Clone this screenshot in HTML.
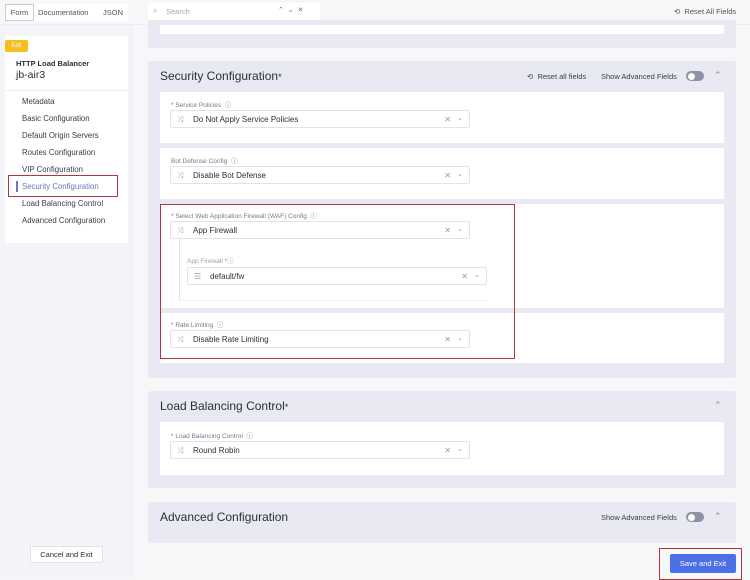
<!DOCTYPE html><html><head><style>
*{box-sizing:border-box;margin:0;padding:0}
body{width:750px;height:577px;overflow:hidden;background:#f6f7f9;font-family:"Liberation Sans",sans-serif;color:#2c2f3a;position:relative}
.a{position:absolute}
.panel{position:absolute;left:148px;width:588px;background:#e8e9f2;border-radius:3px}
.card{position:absolute;left:160px;width:564px;background:#fff}
.lbl{position:absolute;font-size:6.5px;color:#777b88}
.inp{position:absolute;width:300px;height:18px;border:1px solid #e1e3ea;background:#fff;font-size:8px;color:#2c2f3a;border-radius:2px}
.inp .t{position:absolute;left:22px;top:4px}
.inp .ic{position:absolute;left:6px;top:4px;font-size:8px;color:#9a9eaa}
.inp .x{position:absolute;right:18px;top:4px;font-size:8px;color:#999}
.inp .v{position:absolute;right:6px;top:3px;font-size:7px;color:#999}
.h{position:absolute;font-size:12px;color:#2c2f3a}
.nav{position:absolute;left:22px;font-size:7.8px;color:#3a3d48}
.tog{position:absolute;width:18px;height:10px;border-radius:5px;background:#8e93a3}
.tog:after{content:"";position:absolute;left:1.5px;top:1.5px;width:7px;height:7px;border-radius:50%;background:#fff}
.small{font-size:7.5px;color:#3a3d48}
</style></head><body>
<div class="a" style="left:0;top:0;width:750px;height:25px;background:#f6f7f9;border-bottom:1px solid #eceef2"></div>
<div class="a" style="left:5px;top:4px;width:123px;height:17px;background:#fff"></div>
<div class="a" style="left:5px;top:4px;width:29px;height:17px;border:1px solid #c9ccd6;background:#fff;font-size:7.5px;color:#555;text-align:center;line-height:15px">Form</div>
<div class="a small" style="left:38px;top:8px;color:#555">Documentation</div>
<div class="a small" style="left:103px;top:8px;color:#555">JSON</div>
<div class="a" style="left:148px;top:3px;width:172px;height:17px;background:#fff;border-radius:2px"></div>
<div class="a" style="left:153px;top:6px;font-size:8px;color:#aaa">⌕</div>
<div class="a small" style="left:166px;top:7px;color:#aaa">Search</div>
<div class="a" style="left:278px;top:6px;font-size:7px;color:#777">⌃ &nbsp;⌄ &nbsp;✕</div>
<div class="a small" style="left:674px;top:7px;color:#555">⟲ &nbsp;Reset All Fields</div>
<div class="a" style="left:0;top:25px;width:133px;height:552px;background:#f3f4f7;border-right:1px solid #eceef2"></div>
<div class="a" style="left:5px;top:36px;width:123px;height:207px;background:#fff"></div>
<div class="a" style="left:5px;top:40px;width:23px;height:12px;background:#f5bd1f;border-radius:2px;font-size:6px;color:#fff;text-align:center;line-height:12px">Edit</div>
<div class="a" style="left:16px;top:59px;font-size:7.5px;font-weight:bold;color:#2c2f3a">HTTP Load Balancer</div>
<div class="a" style="left:16px;top:69px;font-size:10.5px;color:#2c2f3a">jb-air3</div>
<div class="a" style="left:5px;top:90px;width:123px;height:1px;background:#eceef2"></div>
<div class="nav" style="top:97px">Metadata</div>
<div class="nav" style="top:114px">Basic Configuration</div>
<div class="nav" style="top:131px">Default Origin Servers</div>
<div class="nav" style="top:148px">Routes Configuration</div>
<div class="nav" style="top:165px">VIP Configuration</div>
<div class="nav" style="top:182px;color:#6a78b8">Security Configuration</div>
<div class="a" style="left:16px;top:181px;width:1.5px;height:11px;background:#6a78b8"></div>
<div class="a" style="left:8px;top:175px;width:110px;height:22px;border:1.5px solid #b3343f"></div>
<div class="nav" style="top:199px">Load Balancing Control</div>
<div class="nav" style="top:216px">Advanced Configuration</div>
<div class="a" style="left:30px;top:546px;width:73px;height:17px;background:#fff;border:1px solid #e1e3ea;font-size:7.5px;text-align:center;line-height:15px">Cancel and Exit</div>
<div class="panel" style="top:20px;height:28px"></div>
<div class="card" style="top:25px;height:9px"></div>
<div class="panel" style="top:61px;height:317px"></div>
<div class="h" style="left:160px;top:69px">Security Configuration<span style="font-size:9px">*</span></div>
<div class="a small" style="left:527px;top:72px">⟲ &nbsp;Reset all fields</div>
<div class="a small" style="left:601px;top:72px">Show Advanced Fields</div>
<div class="tog" style="left:686px;top:71px"></div>
<div class="a" style="left:714px;top:70px;font-size:9px;color:#888">⌃</div>
<div class="card" style="top:92px;height:51px"></div>
<div class="lbl" style="left:171px;top:99px">* Service Policies &nbsp;ⓘ</div>
<div class="inp" style="left:170px;top:110px"><span class="ic">⤨</span><span class="t">Do Not Apply Service Policies</span><span class="x">✕</span><span class="v">⌄</span></div>
<div class="card" style="top:148px;height:51px"></div>
<div class="lbl" style="left:171px;top:155px">Bot Defense Config &nbsp;ⓘ</div>
<div class="inp" style="left:170px;top:166px"><span class="ic">⤨</span><span class="t">Disable Bot Defense</span><span class="x">✕</span><span class="v">⌄</span></div>
<div class="card" style="top:204px;height:104px"></div>
<div class="lbl" style="left:171px;top:210px">* Select Web Application Firewall (WAF) Config &nbsp;ⓘ</div>
<div class="inp" style="left:170px;top:221px"><span class="ic">⤨</span><span class="t">App Firewall</span><span class="x">✕</span><span class="v">⌄</span></div>
<div class="a" style="left:179px;top:239px;width:1px;height:62px;background:#e1e3ea"></div>
<div class="a" style="left:179px;top:300px;width:308px;height:1px;background:#eef0f3"></div>
<div class="lbl" style="left:187px;top:255px;color:#9a9eaa">App Firewall *ⓘ</div>
<div class="inp" style="left:187px;top:267px"><span class="ic">☰</span><span class="t">default/fw</span><span class="x">✕</span><span class="v">⌄</span></div>
<div class="card" style="top:313px;height:50px"></div>
<div class="lbl" style="left:171px;top:319px">* Rate Limiting &nbsp;ⓘ</div>
<div class="inp" style="left:170px;top:330px"><span class="ic">⤨</span><span class="t">Disable Rate Limiting</span><span class="x">✕</span><span class="v">⌄</span></div>
<div class="a" style="left:160px;top:204px;width:355px;height:155px;border:1.5px solid #b3343f"></div>
<div class="panel" style="top:391px;height:97px"></div>
<div class="h" style="left:160px;top:399px">Load Balancing Control<span style="font-size:9px">*</span></div>
<div class="a" style="left:714px;top:400px;font-size:9px;color:#888">⌃</div>
<div class="card" style="top:422px;height:53px"></div>
<div class="lbl" style="left:171px;top:430px">* Load Balancing Control &nbsp;ⓘ</div>
<div class="inp" style="left:170px;top:441px"><span class="ic">⤨</span><span class="t">Round Robin</span><span class="x">✕</span><span class="v">⌄</span></div>
<div class="panel" style="top:502px;height:41px"></div>
<div class="h" style="left:160px;top:510px">Advanced Configuration</div>
<div class="a small" style="left:601px;top:513px">Show Advanced Fields</div>
<div class="tog" style="left:686px;top:512px"></div>
<div class="a" style="left:714px;top:511px;font-size:9px;color:#888">⌃</div>
<div class="a" style="left:670px;top:554px;width:66px;height:19px;background:#4b6fe6;border-radius:2px;color:#fff;font-size:7.5px;text-align:center;line-height:19px">Save and Exit</div>
<div class="a" style="left:659px;top:548px;width:83px;height:32px;border:1.5px solid #b3343f"></div>
</body></html>
